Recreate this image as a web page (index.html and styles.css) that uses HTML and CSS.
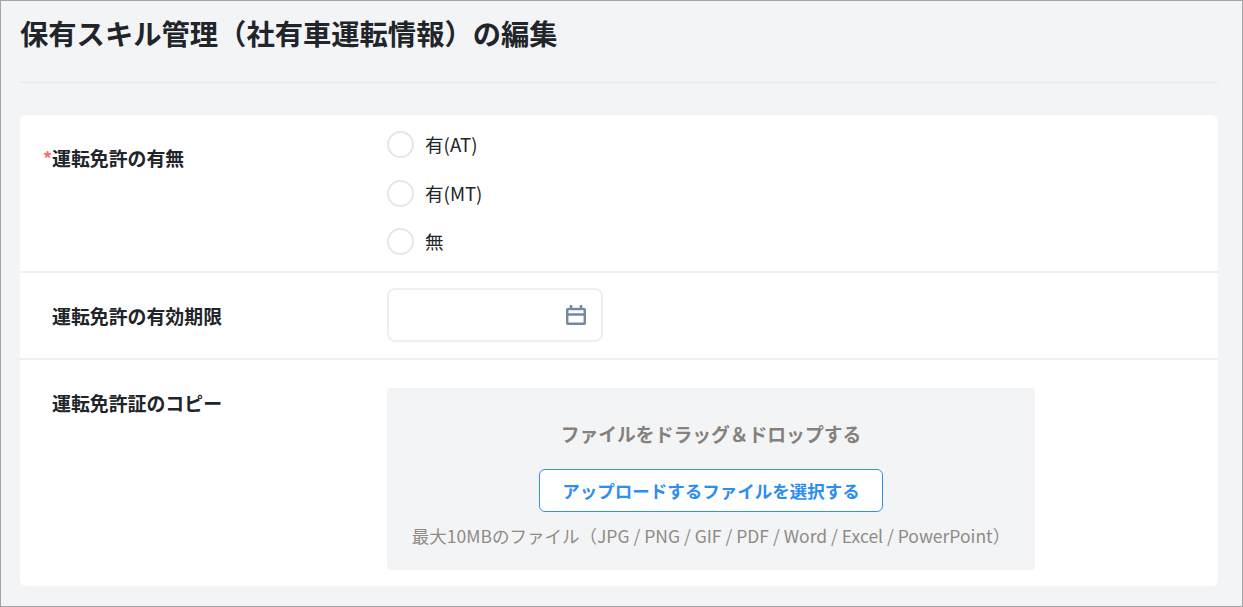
FILE: index.html
```html
<!DOCTYPE html>
<html lang="ja">
<head>
<meta charset="utf-8">
<title>保有スキル管理（社有車運転情報）の編集</title>
<link rel="stylesheet" href="styles.css">
</head>
<body>
<main class="frame">
  <h1 class="title">保有スキル管理（社有車運転情報）の編集</h1>
  <form class="card">
    <div class="row row-radio">
      <div class="label"><span class="req">*</span>運転免許の有無</div>
      <div class="radios">
        <label class="radio"><span class="circle"></span><span>有(AT)</span></label>
        <label class="radio"><span class="circle"></span><span>有(MT)</span></label>
        <label class="radio"><span class="circle"></span><span>無</span></label>
      </div>
    </div>
    <div class="row row-date">
      <div class="label">運転免許の有効期限</div>
      <div class="date">
        <svg class="cal" width="20" height="20" viewBox="0 0 20 20" fill="none" stroke="#7489a2" stroke-width="2.5">
          <rect x="1.2" y="4" width="17.6" height="14.8" rx="1"/>
          <path d="M1 9.5h18M5 0v4M15 0v4"/>
        </svg>
      </div>
    </div>
    <div class="row row-file">
      <div class="label">運転免許証のコピー</div>
      <div class="drop">
        <p class="drop-title">ファイルをドラッグ＆ドロップする</p>
        <button type="button" class="upload">アップロードするファイルを選択する</button>
        <p class="drop-note">最大10MBのファイル（JPG / PNG / GIF / PDF / Word / Excel / PowerPoint）</p>
      </div>
    </div>
  </form>
</main>
</body>
</html>
```
FILE: styles.css
```css
* { box-sizing: border-box; }
html, body { margin: 0; height: 100%; }
body {
  font-family: "Noto Sans CJK JP", "Noto Sans", sans-serif;
  color: #212529;
  overflow: hidden;
}
.frame {
  height: 607px;
  background: #f3f4f6;
  border: 1px solid #a2a4a6;
  padding: 0 24px 0 19px;
  display: flex;
  flex-direction: column;
}
.title {
  margin: 0;
  height: 82px;
  padding-top: 12px;
  font-size: 28.3px;
  line-height: 40px;
  font-weight: 700;
  border-bottom: 1px solid #e6e8eb;
}
.card {
  margin-top: 32px;
  background: #fff;
  border-radius: 6px;
  height: 471px;
  display: flex;
  flex-direction: column;
}
.row {
  display: flex;
  align-items: flex-start;
  padding-left: 32px;
  border-bottom: 2px solid #edf0f3;
}
.row:last-child { border-bottom: 0; flex: 1; }
.row-radio { height: 158px; }
.row-date { height: 87px; padding-top: 16px; }
.row-file { padding-top: 28px; }
.label {
  width: 335px;
  font-size: 18.9px;
  line-height: 28px;
  font-weight: 700;
  flex: none;
}
.row-radio .label { padding-top: 29px; position: relative; }
.row-date .label { padding-top: 13px; }
.row-file .label { margin-top: 1px; }
.req {
  position: absolute;
  left: -9px;
  color: #ff6b6e;
  font-size: 18px;
}
.radios {
  display: flex;
  flex-direction: column;
  gap: 20px;
  padding-top: 15px;
}
.radio {
  display: flex;
  align-items: center;
  gap: 11px;
  height: 28px;
  font-size: 18.6px;
  line-height: 28px;
}
.radio:nth-child(2) { margin-top: 1px; }
.circle {
  width: 27px;
  height: 27px;
  border: 2px solid #e2e7ec;
  border-radius: 50%;
  background: #fff;
  flex: none;
}
.date {
  width: 216px;
  height: 54px;
  margin-top: -1px;
  border: 2px solid #edf0f3;
  border-radius: 8px;
  display: flex;
  align-items: center;
  justify-content: flex-end;
  padding-right: 15px;
}
.drop {
  width: 648px;
  height: 182px;
  background: #f3f4f6;
  border-radius: 4px;
  display: flex;
  flex-direction: column;
  align-items: center;
  padding-top: 32px;
}
.drop-title {
  margin: 0;
  font-size: 18.8px;
  line-height: 28px;
  font-weight: 700;
  color: #85817c;
}
.upload {
  margin-top: 21px;
  width: 344px;
  height: 43px;
  background: #fff;
  border: 1px solid #2f90f0;
  border-radius: 6px;
  color: #2e8ef0;
  font: 700 17.5px/28px "Noto Sans CJK JP", "Noto Sans", sans-serif;
  padding: 0;
}
.drop-note {
  margin: 10px 0 0;
  font-size: 17.5px;
  line-height: 28px;
  color: #8f8b86;
  white-space: nowrap;
}
```
